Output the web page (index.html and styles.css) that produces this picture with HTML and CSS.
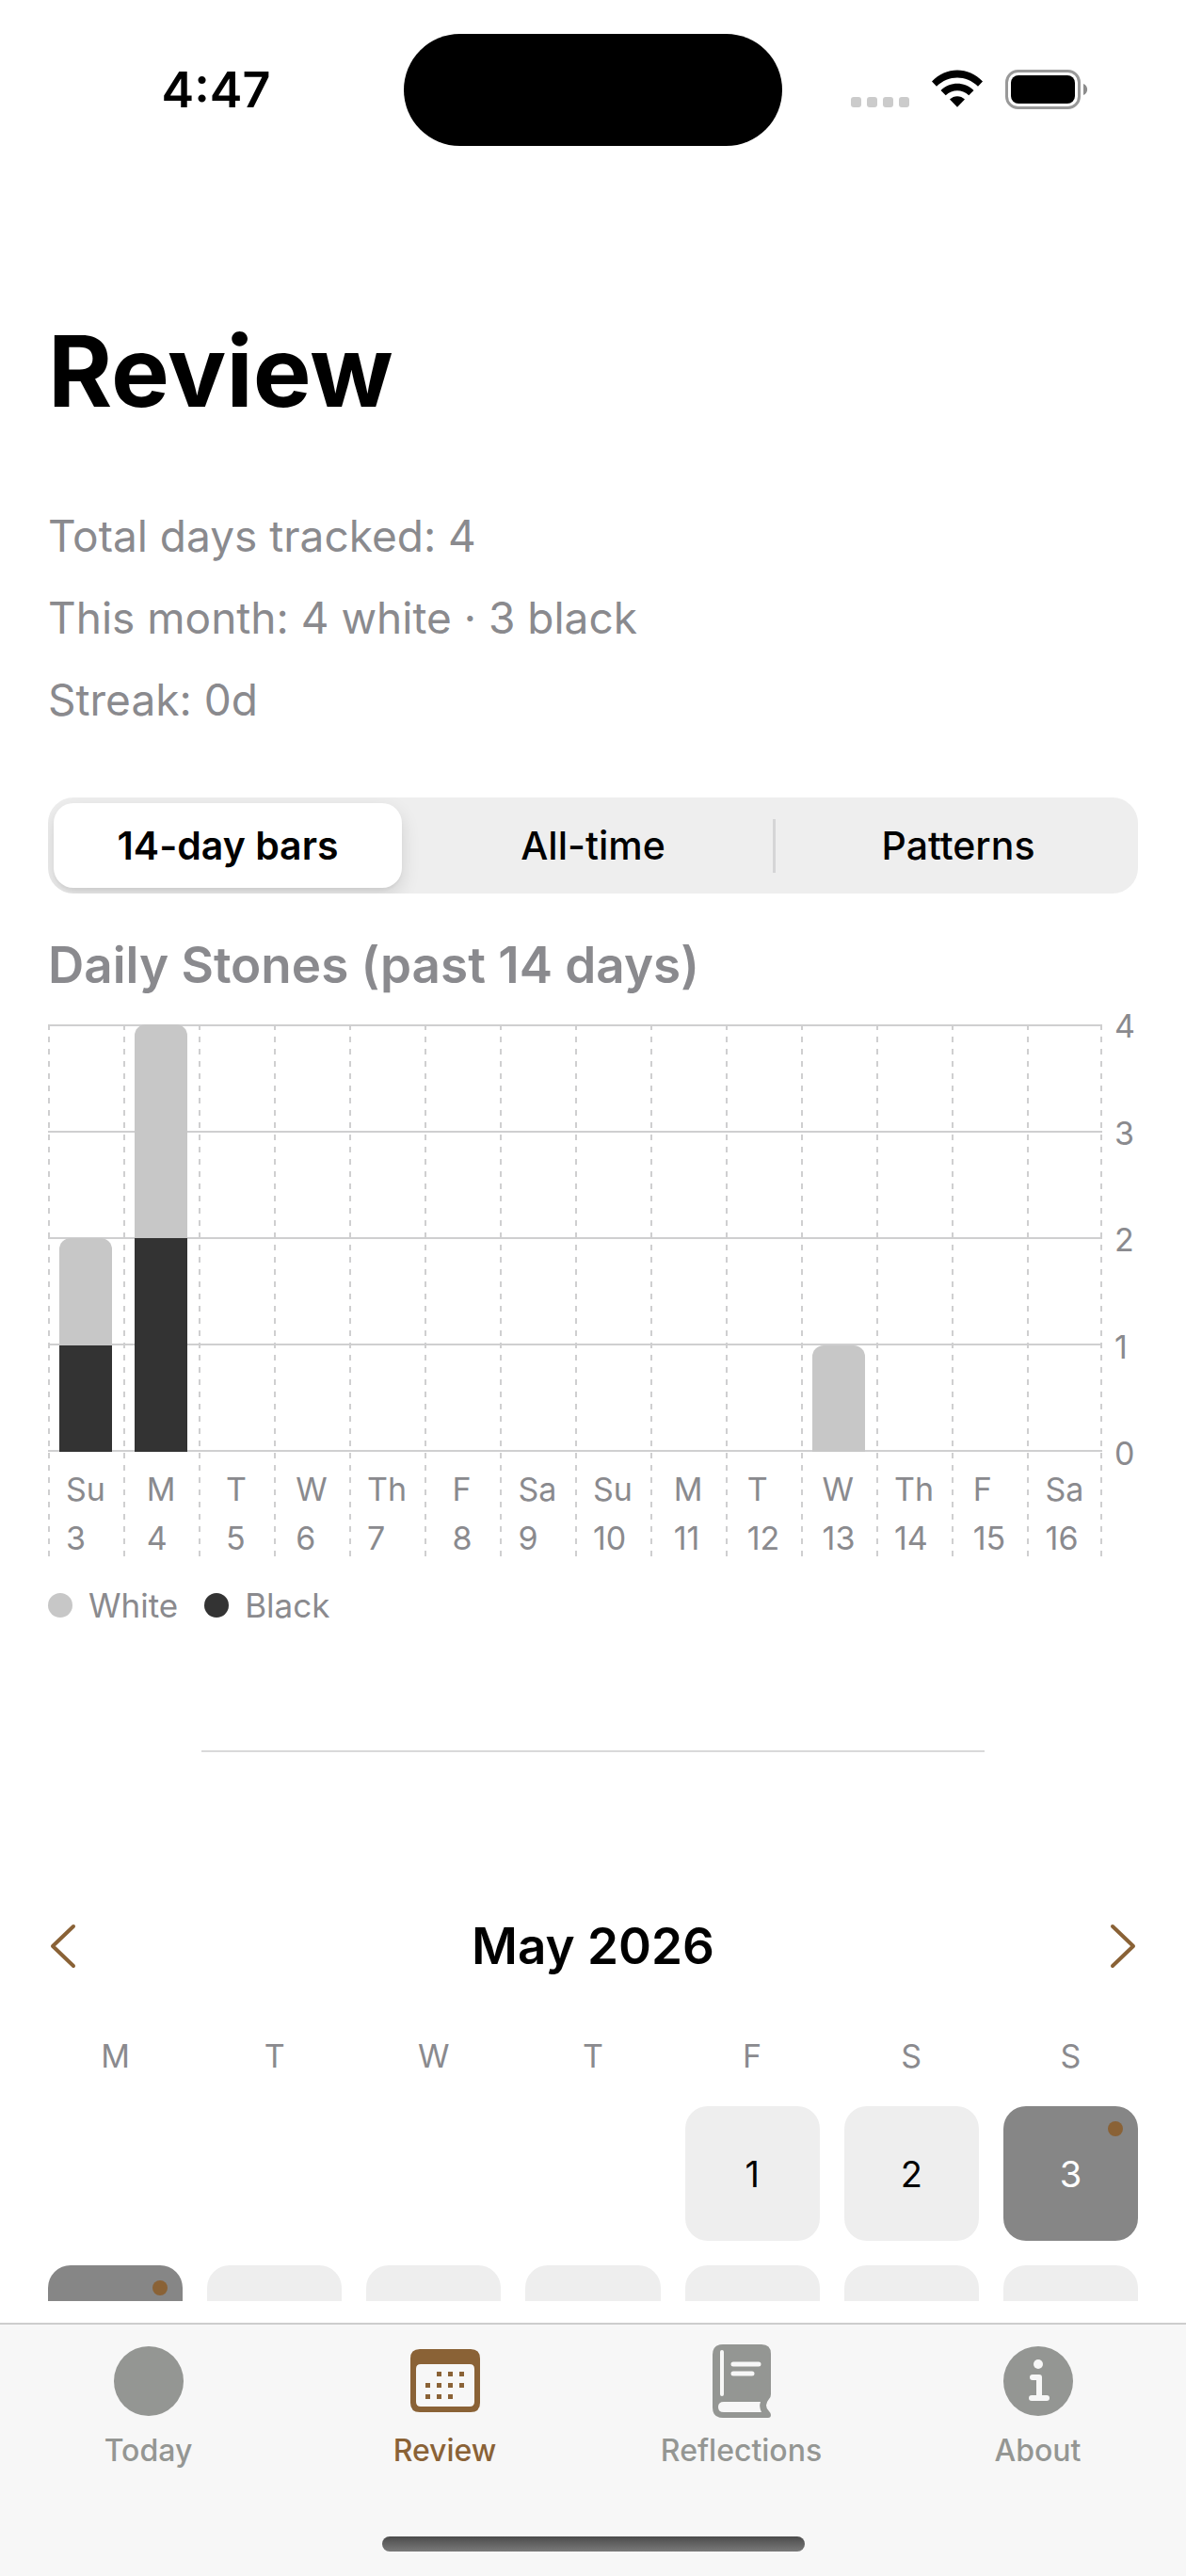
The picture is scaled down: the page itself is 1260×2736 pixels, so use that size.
FILE: index.html
```html
<!DOCTYPE html>
<html lang="en">
<head>
    <meta charset="UTF-8">
    <meta name="viewport" content="width=device-width, initial-scale=1.0">
    <title>Review</title>
    <link rel="stylesheet" href="styles.css">
</head>
<body>
    <!-- STATUS BAR -->
    <header class="status-bar">
        <time class="clock">4:47</time>
        <div class="island"></div>
        <div class="status-icons">
            <svg width="62" height="42" viewBox="0 0 62 42" fill="#cbcbcb" aria-hidden="true">
                <rect x="0" y="29" width="11" height="11" rx="3"/>
                <rect x="17" y="29" width="11" height="11" rx="3"/>
                <rect x="34" y="29" width="11" height="11" rx="3"/>
                <rect x="51" y="29" width="11" height="11" rx="3"/>
            </svg>
            <svg width="54" height="42" viewBox="0 0 54 42" aria-hidden="true">
                <path d="M0 12.500C15-3.500 39-3.500 54 12.500L49 17.700C36 5.500 18 5.500 5 17.700Z"/>
                <path d="M9.500 22C19.500 12.300 34.500 12.300 44.500 22L39.300 27.200C32 20.500 22 20.500 14.700 27.200Z"/>
                <path d="M19 31.500C23.500 27 30.500 27 35 31.500L27 39.800Z"/>
            </svg>
            <svg width="88" height="42" viewBox="0 0 88 42" aria-hidden="true">
                <rect x="1.500" y="1.500" width="77" height="39" rx="12" fill="none" stroke="#999" stroke-width="3"/>
                <rect x="6" y="6" width="68" height="30" rx="8"/>
                <path d="M83 15C88.500 17 88.500 25 83 27Z" fill="#8c8c8c"/>
            </svg>
        </div>
    </header>

    <!-- MAIN CONTENT -->
    <main>
        <h1>Review</h1>

        <section class="stats">
            <p>Total days tracked: 4</p>
            <p>This month: 4 white · 3 black</p>
            <p>Streak: 0d</p>
        </section>

        <div class="segmented" role="tablist">
            <button type="button" role="tab" aria-selected="true" class="segment active">14-day bars</button>
            <button type="button" role="tab" aria-selected="false" class="segment">All-time</button>
            <button type="button" role="tab" aria-selected="false" class="segment divided">Patterns</button>
        </div>

        <!-- Daily Stones Chart -->
        <section class="daily">
            <h2>Daily Stones (past 14 days)</h2>
            <div class="chart">
                <div class="plot">
                    <div class="day">
                        <div class="bars">
                            <div class="white" style="height: 25%"></div>
                            <div class="black" style="height: 25%"></div>
                        </div>
                        <p>Su<br>3</p>
                    </div>
                    <div class="day">
                        <div class="bars">
                            <div class="white" style="height: 50%"></div>
                            <div class="black" style="height: 50%"></div>
                        </div>
                        <p>M<br>4</p>
                    </div>
                    <div class="day"><div class="bars"></div><p>T<br>5</p></div>
                    <div class="day"><div class="bars"></div><p>W<br>6</p></div>
                    <div class="day"><div class="bars"></div><p>Th<br>7</p></div>
                    <div class="day"><div class="bars"></div><p>F<br>8</p></div>
                    <div class="day"><div class="bars"></div><p>Sa<br>9</p></div>
                    <div class="day"><div class="bars"></div><p>Su<br>10</p></div>
                    <div class="day"><div class="bars"></div><p>M<br>11</p></div>
                    <div class="day"><div class="bars"></div><p>T<br>12</p></div>
                    <div class="day">
                        <div class="bars">
                            <div class="white" style="height: 25%"></div>
                        </div>
                        <p>W<br>13</p>
                    </div>
                    <div class="day"><div class="bars"></div><p>Th<br>14</p></div>
                    <div class="day"><div class="bars"></div><p>F<br>15</p></div>
                    <div class="day"><div class="bars"></div><p>Sa<br>16</p></div>
                </div>
                <div class="axis">
                    <span>4</span>
                    <span>3</span>
                    <span>2</span>
                    <span>1</span>
                    <span>0</span>
                </div>
            </div>
            <div class="legend">
                <span class="key key-white">White</span>
                <span class="key key-black">Black</span>
            </div>
        </section>

        <hr>

        <!-- Month Calendar -->
        <section class="calendar">
            <div class="month">
                <button type="button" aria-label="Previous month">
                    <svg width="30" height="48" viewBox="0 0 30 48" aria-hidden="true"><path d="M27 3L5 24L27 45"/></svg>
                </button>
                <h2>May 2026</h2>
                <button type="button" aria-label="Next month">
                    <svg width="30" height="48" viewBox="0 0 30 48" aria-hidden="true"><path d="M3 3L25 24L3 45"/></svg>
                </button>
            </div>
            <div class="weekdays">
                <span>M</span>
                <span>T</span>
                <span>W</span>
                <span>T</span>
                <span>F</span>
                <span>S</span>
                <span>S</span>
            </div>
            <div class="dates">
                <button type="button" class="date first">1</button>
                <button type="button" class="date">2</button>
                <button type="button" class="date mixed">3</button>
                <button type="button" class="date mixed" aria-label="May 4"></button>
                <button type="button" class="date" aria-label="May 5"></button>
                <button type="button" class="date" aria-label="May 6"></button>
                <button type="button" class="date" aria-label="May 7"></button>
                <button type="button" class="date" aria-label="May 8"></button>
                <button type="button" class="date" aria-label="May 9"></button>
                <button type="button" class="date" aria-label="May 10"></button>
            </div>
        </section>
    </main>

    <!-- TAB BAR -->
    <footer class="tab-bar">
        <nav>
            <a href="#today">
                <svg width="80" height="80" viewBox="0 0 80 80" aria-hidden="true"><circle cx="40" cy="40" r="37"/></svg>
                Today
            </a>
            <a href="#review" class="current" aria-current="page">
                <svg width="80" height="80" viewBox="0 0 80 80" aria-hidden="true">
                    <path fill-rule="evenodd" d="M13 6H67Q77 6 77 16V63Q77 73 67 73H13Q3 73 3 63V16Q3 6 13 6ZM14 22Q9 22 9 27V62Q9 67 14 67H66Q71 67 71 62V27Q71 22 66 22Z"/>
                    <path d="M31 30h5v5h-5zM43 30h5v5h-5zM55 30h5v5h-5zM19 42h5v5h-5zM31 42h5v5h-5zM43 42h5v5h-5zM55 42h5v5h-5zM19 54h5v5h-5zM31 54h5v5h-5zM43 54h5v5h-5z"/>
                </svg>
                Review
            </a>
            <a href="#reflections">
                <svg width="80" height="80" viewBox="0 0 80 80" aria-hidden="true">
                    <path d="M20 1H61Q71 1 71 11V54Q71 57 69 59Q63 66 69 72Q71 74 71 76Q71 79 68 79H20Q9 79 9 68V12Q9 1 20 1Z"/>
                    <path fill="#f7f7f7" d="M21 62H60Q58 67 61 73H21Q15 73 15 67.500Q15 62 21 62Z"/>
                    <path fill="none" stroke="#f7f7f7" stroke-width="5" stroke-linecap="round" d="M31 22H58M31 32H51"/>
                    <path fill="none" stroke="#f7f7f7" stroke-width="4" stroke-linecap="round" d="M19 9V54"/>
                </svg>
                Reflections
            </a>
            <a href="#about">
                <svg width="80" height="80" viewBox="0 0 80 80" aria-hidden="true">
                    <circle cx="40" cy="40" r="37"/>
                    <circle cx="40" cy="22" r="5" fill="#f7f7f7"/>
                    <path fill="none" stroke="#f7f7f7" stroke-width="6" stroke-linecap="round" stroke-linejoin="round" d="M34 36H41V58M33 58H49"/>
                </svg>
                About
            </a>
        </nav>
        <div class="home-indicator"></div>
    </footer>
</body>
</html>
```
FILE: styles.css
```css
/* Global Styles */
* {
    margin: 0;
    padding: 0;
    box-sizing: border-box;
    font-family: Inter, "Liberation Sans", sans-serif;
}

body {
    display: flex;
    flex-direction: column;
    height: 100vh;
    background-color: white;
    color: black;
}

button {
    border: none;
    background: none;
    color: inherit;
    cursor: pointer;
}

svg {
    display: block;
}

/* Status Bar */
.status-bar {
    display: grid;
    grid-template-columns: 1fr 402px 1fr;
    align-items: center;
    flex-shrink: 0;
    height: 190px;
}

.clock {
    padding-left: 30px;
    font-size: 52px;
    font-weight: 600;
    text-align: center;
}

.island {
    height: 119px;
    border-radius: 60px;
    background-color: black;
}

.status-icons {
    display: flex;
    justify-content: center;
    gap: 24px;
    padding-right: 32px;
}

/* Main Content */
main {
    flex: 1;
    min-height: 0;
    margin-bottom: 23px;
    padding: 144px 51px 0;
    overflow: hidden;
}

h1 {
    font-size: 104px;
    font-weight: 700;
    line-height: 120px;
}

h2 {
    font-size: 53px;
    font-weight: 600;
    line-height: 62px;
}

.stats {
    margin-top: 72px;
    font-size: 46px;
    line-height: 87px;
    color: #8a8a8e;
}

/* Segmented Control */
.segmented {
    display: grid;
    grid-template-columns: repeat(3, 1fr);
    height: 102px;
    margin-top: 60px;
    padding: 6px;
    border-radius: 27px;
    background-color: #eeeeee;
    overflow: hidden;
}

.segment {
    font-size: 41px;
    font-weight: 500;
}

.segment.active {
    margin-right: 12px;
    border-radius: 21px;
    background-color: white;
    box-shadow: 0 8px 20px rgba(0, 0, 0, 0.12), 0 3px 3px rgba(0, 0, 0, 0.04);
    font-weight: 600;
}

.segment.divided {
    padding-left: 12px;
    background: linear-gradient(#d5d5d6, #d5d5d6) left center / 3px 57px no-repeat;
}

/* Daily Stones Chart */
.daily {
    margin-top: 45px;
    color: #8a8a8e;
}

.chart {
    display: flex;
    gap: 13px;
    margin-top: 32px;
}

.plot {
    display: grid;
    flex: 1;
    grid-template-columns: repeat(14, 1fr);
}

/* Dashed line at the left of every day */
.day {
    background: repeating-linear-gradient(#cfcfd0 0 6px, transparent 6px 13px) left top / 2px 100% no-repeat;
}

.day:last-child {
    background:
        repeating-linear-gradient(#cfcfd0 0 6px, transparent 6px 13px) left top / 2px 100% no-repeat,
        repeating-linear-gradient(#cfcfd0 0 6px, transparent 6px 13px) right top / 2px 100% no-repeat;
}

.bars {
    display: flex;
    flex-direction: column;
    justify-content: flex-end;
    height: 454px;
    padding: 0 12px;
    background: repeating-linear-gradient(#cfcfd0 0 2px, transparent 2px 113px);
}

.white {
    border-radius: 12px 12px 0 0;
    background-color: #c7c7c7;
}

.black {
    background-color: #333333;
}

.day p {
    width: fit-content;
    margin: 14px auto 0;
    font-size: 34px;
    line-height: 52px;
}

.axis {
    display: flex;
    flex-direction: column;
    justify-content: space-between;
    width: 25px;
    height: 494px;
    margin-top: -18px;
    font-size: 34px;
    line-height: 40px;
}

.legend {
    display: flex;
    gap: 28px;
    margin-top: 24px;
    font-size: 35px;
    line-height: 42px;
}

.key {
    display: flex;
    align-items: center;
    gap: 17px;
}

.key::before {
    content: "";
    width: 26px;
    height: 26px;
    border-radius: 50%;
}

.key-white::before {
    background-color: #c7c7c7;
}

.key-black::before {
    background-color: #333333;
}

hr {
    height: 2px;
    margin: 133px 163px 0;
    border: none;
    background-color: #d9d9da;
}

/* Month Calendar */
.month {
    display: flex;
    justify-content: space-between;
    align-items: center;
    margin-top: 175px;
}

.month path {
    fill: none;
    stroke: #8a6236;
    stroke-width: 4;
    stroke-linecap: round;
    stroke-linejoin: round;
}

.weekdays,
.dates {
    display: grid;
    grid-template-columns: repeat(7, 1fr);
    gap: 26px;
}

.weekdays {
    margin-top: 65px;
    font-size: 34px;
    line-height: 42px;
    text-align: center;
    color: #8a8a8e;
}

.dates {
    margin-top: 32px;
}

.date {
    position: relative;
    aspect-ratio: 1;
    border-radius: 24px;
    background-color: #eeeeee;
    font-size: 38px;
}

/* May starts on a Friday */
.date.first {
    grid-column-start: 5;
}

.date.mixed {
    background-color: #868686;
    color: white;
}

.date.mixed::after {
    content: "";
    position: absolute;
    top: 16px;
    right: 16px;
    width: 16px;
    height: 16px;
    border-radius: 50%;
    background-color: #8a6236;
}

/* Tab Bar */
.tab-bar {
    flex-shrink: 0;
    height: 269px;
    border-top: 2px solid #cdcdcd;
    background-color: #f7f7f7;
}

nav {
    display: grid;
    grid-template-columns: repeat(4, 1fr);
    padding-top: 20px;
}

nav a {
    display: flex;
    flex-direction: column;
    align-items: center;
    gap: 14px;
    color: #949693;
    font-size: 32px;
    font-weight: 500;
    line-height: 40px;
    text-decoration: none;
}

nav svg {
    fill: currentColor;
}

nav .current {
    color: #8a6236;
}

.home-indicator {
    width: 449px;
    height: 16px;
    margin: 71px auto 0;
    border-radius: 8px;
    background: linear-gradient(#4b4b4b, #7a7a7a);
}
```
